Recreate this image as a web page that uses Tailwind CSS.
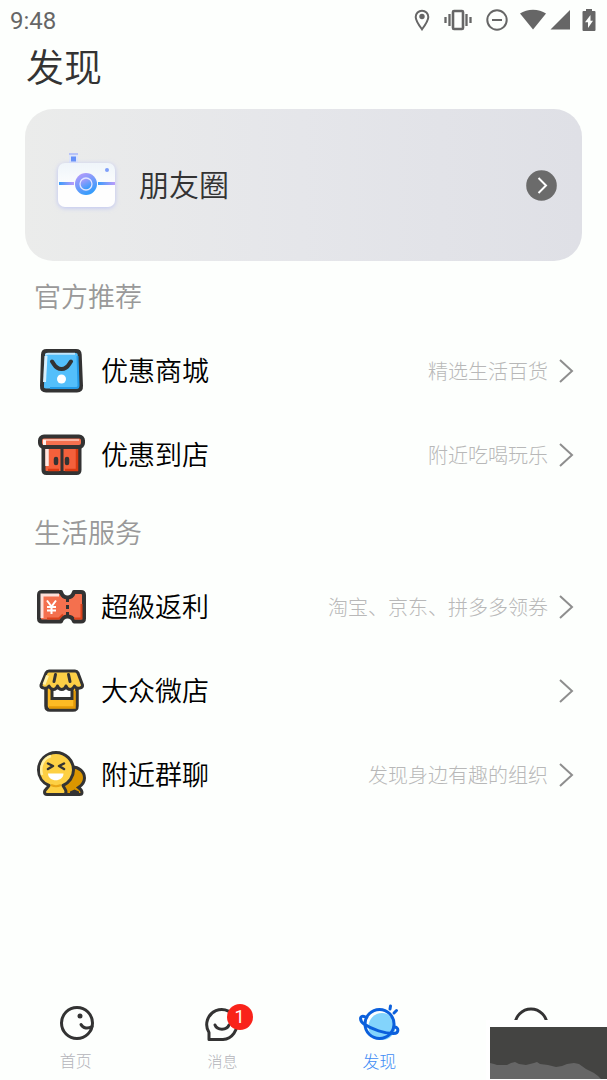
<!DOCTYPE html>
<html lang="zh-CN">
<head>
  <meta charset="UTF-8" />
  <meta name="viewport" content="width=device-width, initial-scale=1.0" />
  <title>发现</title>
  <script src="https://cdn.jsdelivr.net/npm/@tailwindcss/browser@4"></script>
</head>
<body class="min-h-screen flex flex-col overflow-x-hidden bg-[#fdfffd] text-black font-['Roboto','Noto_Sans_CJK_SC',sans-serif]">

  <!-- Status bar -->
  <header class="h-10 shrink-0 flex items-center justify-between pl-[10px] pr-[11px] text-[#666]">
    <span class="pt-0.5 text-2xl">9:48</span>
    <div class="flex items-center">
      <svg class="w-4 h-[22px]" viewBox="0 0 16 22" fill="none" stroke="currentColor" stroke-width="2">
        <path d="M8 20.300C5.500 17 1.700 12 1.700 8a6.300 6.300 0 0 1 12.600 0c0 4-3.800 9-6.300 12.300z" />
        <circle cx="8" cy="7.500" r="2.700" fill="currentColor" stroke="none" />
      </svg>
      <svg class="w-7 h-[22px] ml-[14px]" viewBox="0 0 28 22" fill="none" stroke="currentColor" stroke-width="2.300">
        <rect x="9" y="2" width="10" height="18" rx="1" stroke-width="2.600" />
        <path d="M5.500 5v12M22.500 5v12M1.500 8v6M26.500 8v6" />
      </svg>
      <svg class="w-[22px] h-[22px] ml-[14px]" viewBox="0 0 22 22" fill="none" stroke="currentColor" stroke-width="2">
        <circle cx="11" cy="11" r="9.700" />
        <path d="M6 11h10" />
      </svg>
      <svg class="w-[26px] h-[22px] ml-3" viewBox="0 0 26 22" fill="currentColor">
        <path d="M0 4.500C7-.6 19-.6 26 4.500L13 20.500z" />
      </svg>
      <svg class="w-5 h-[22px] ml-1" viewBox="0 0 20 22" fill="currentColor">
        <path d="M20 1v19.500H.5z" />
      </svg>
      <svg class="w-[14px] h-6 ml-3" viewBox="0 0 14 24" fill="currentColor">
        <path fill-rule="evenodd" d="M4 1h6v2h2.500q1 0 1 1v18q0 1-1 1h-11q-1 0-1-1V4q0-1 1-1H4zM8.500 7L3 14.300h3V20l5-7.300H8.500z" />
      </svg>
    </div>
  </header>

  <main class="flex-1 px-[25px]">
    <h1 class="h-14 flex items-center pl-px text-[38px] font-[350] text-[#333]">发现</h1>

    <!-- Moments card -->
    <a href="#" class="mt-[13px] h-[152px] flex items-center rounded-[28px] pl-[26px] pr-[25px] bg-linear-to-r from-[#ebeceb] via-[#e5e6ea] to-[#dfe0e6]">
      <svg class="w-[70px] h-[70px]" viewBox="0 0 70 70">
        <defs>
          <linearGradient id="lens" x1="0" y1="0" x2="0.5" y2="1">
            <stop offset="0" stop-color="#c29afb" />
            <stop offset="1" stop-color="#369cfb" />
          </linearGradient>
          <linearGradient id="stripLeft">
            <stop offset="0" stop-color="#3a9cfa" />
            <stop offset="1" stop-color="#bc9cfb" />
          </linearGradient>
          <linearGradient id="shell" x1="0" y1="0" x2="0" y2="1">
            <stop offset="0" stop-color="#eff5fa" />
            <stop offset="0.6" stop-color="#fefefe" />
          </linearGradient>
          <filter id="glow" x="-20%" y="-20%" width="140%" height="140%">
            <feDropShadow dx="0" dy="1" stdDeviation="2.500" flood-color="#a9b2f5" flood-opacity="0.7" />
          </filter>
        </defs>
        <path d="M18 5h9v11h-9z" fill="#dfe6fa" />
        <path d="M18 3h9v2h-9z" fill="#b8c3f7" />
        <path d="M20 6.500h5v5h-5z" fill="#6590f8" />
        <rect x="7" y="13" width="57" height="44" rx="7" fill="url(#shell)" filter="url(#glow)" />
        <rect x="8" y="32" width="15" height="3" fill="url(#stripLeft)" />
        <rect x="47" y="32" width="17" height="3" fill="url(#stripLeft)" />
        <circle cx="35" cy="34" r="11" fill="url(#lens)" />
        <circle cx="35" cy="34" r="6" fill="url(#lens)" stroke="#e2e5ff" stroke-width="1.300" />
        <circle cx="56" cy="20" r="2" fill="#7f9ff9" />
      </svg>
      <span class="ml-[18px] pt-0.5 text-3xl font-[350] text-[#333]">朋友圈</span>
      <svg class="ml-auto w-[31px] h-[31px]" viewBox="0 0 31 31" fill="none">
        <circle cx="15.500" cy="15.500" r="15.300" fill="#6b6b6b" />
        <path d="M12.500 8l7.500 7.500-7.500 7.500" stroke="#fff" stroke-width="2" />
      </svg>
    </a>

    <!-- Official picks -->
    <section class="pl-[9px] pr-2">
      <h2 class="h-[68px] pt-[7px] flex items-center text-[27px] font-[350] text-[#999]">官方推荐</h2>
      <ul>
        <li>
          <a href="#" class="h-[84px] flex items-center">
            <svg class="w-[54px] h-[54px]" viewBox="0 0 54 54">
              <path d="M12.500 7H42q3.500 0 3.700 3.500L47 42q.3 4.500-4 4.500H12q-4.300 0-4-4.500L9 10.500Q9.200 7 12.500 7z" fill="#53bffb" stroke="#333" stroke-width="4" />
              <path d="M12 11.500q0-1.700 2-1.700h27" fill="none" stroke="#c0e6fd" stroke-width="2" />
              <path d="M12 12l-1.500 26" stroke="#d7effd" stroke-width="3" />
              <path d="M43.500 12l1 29.500q0 2.500-2.500 2.500H16" fill="none" stroke="#249be8" stroke-width="2" />
              <path d="M18 17.500c2 2 3 7.500 9.500 7.500s7.500-5.500 9.500-7.500" fill="none" stroke="#333" stroke-width="4" stroke-linecap="round" />
              <circle cx="27.500" cy="35" r="4.500" fill="#fff" />
            </svg>
            <span class="ml-[13px] pt-[3px] text-[27px] font-[350]">优惠商城</span>
            <span class="ml-auto pt-0.5 text-xl font-light text-[#b8b8b8]">精选生活百货</span>
            <svg class="ml-[10px] w-4 h-6" viewBox="0 0 16 24" fill="none" stroke="#8e8e8e" stroke-width="2"><path d="M2 1l12 11L2 23" /></svg>
          </a>
        </li>
        <li>
          <a href="#" class="h-[84px] flex items-center">
            <svg class="w-[54px] h-[54px]" viewBox="0 0 54 54">
              <path d="M9.500 18v24q0 3 3 3h30q3 0 3-3V18z" fill="#f4603b" stroke="#333" stroke-width="4" />
              <path d="M13 19v19" stroke="#fde7e2" stroke-width="3.500" />
              <path d="M43 20v22H31M25 42H14" fill="none" stroke="#d93a12" stroke-width="2.500" />
              <rect x="6" y="8.500" width="43" height="10.500" rx="4" fill="#f5704f" stroke="#333" stroke-width="4" />
              <path d="M9 12h36" stroke="#fbb3a0" stroke-width="2" />
              <path d="M9 12h3v5H9z" fill="#fff1ed" />
              <path d="M28 19v26" stroke="#333" stroke-width="3" />
              <path d="M22 31v4M33 31v4" stroke="#333" stroke-width="4.500" stroke-linecap="round" />
            </svg>
            <span class="ml-[13px] pt-[3px] text-[27px] font-[350]">优惠到店</span>
            <span class="ml-auto pt-0.5 text-xl font-light text-[#b8b8b8]">附近吃喝玩乐</span>
            <svg class="ml-[10px] w-4 h-6" viewBox="0 0 16 24" fill="none" stroke="#8e8e8e" stroke-width="2"><path d="M2 1l12 11L2 23" /></svg>
          </a>
        </li>
      </ul>
    </section>

    <!-- Local services -->
    <section class="pl-[9px] pr-2">
      <h2 class="h-[68px] pt-[7px] flex items-center text-[27px] font-[350] text-[#999]">生活服务</h2>
      <ul>
        <li>
          <a href="#" class="h-[84px] flex items-center">
            <svg class="w-[54px] h-[54px]" viewBox="0 0 54 54">
              <path d="M8 12h19c1 3.500 3.500 5.500 6.500 5.500s5.500-2 6.500-5.500h7q3 0 3 3v23.500q0 3-3 3h-7c-1-3.500-3.500-5-6.500-5s-5.500 1.500-6.500 5H8q-3 0-3-3V15q0-3 3-3z" fill="#f4704e" stroke="#333" stroke-width="4" stroke-linejoin="round" />
              <path d="M25 15H8v23" fill="none" stroke="#fde0d9" stroke-width="3" />
              <path d="M13 38.500h12l4-4M40 38.500h7.500V24" fill="none" stroke="#dc431c" stroke-width="2" />
              <path d="M13 20.500l4.500 6 4.500-6M17.500 26v8M13 27h9M13 30.500h9" fill="none" stroke="#fff" stroke-width="2" />
              <path d="M33.500 17v5M33.500 25v4M33.500 32v5" stroke="#333" stroke-width="3" />
            </svg>
            <span class="ml-[13px] pt-[3px] text-[27px] font-[350]">超級返利</span>
            <span class="ml-auto pt-0.5 text-xl font-light text-[#b8b8b8]">淘宝、京东、拼多多领券</span>
            <svg class="ml-[10px] w-4 h-6" viewBox="0 0 16 24" fill="none" stroke="#8e8e8e" stroke-width="2"><path d="M2 1l12 11L2 23" /></svg>
          </a>
        </li>
        <li>
          <a href="#" class="h-[84px] flex items-center">
            <svg class="w-[54px] h-[54px]" viewBox="0 0 54 54">
              <path d="M12 22v20q0 4 4 4h23q4 0 4-4V22z" fill="#fdbb24" stroke="#333" stroke-width="3.500" />
              <path d="M40.500 27v16.500H15" fill="none" stroke="#e39a08" stroke-width="2.500" />
              <path d="M18 20h20v14.500H18z" fill="#fff" stroke="#333" stroke-width="3" />
              <path d="M15 7h26q2 0 3 2l4.500 12c.5 3-5.500 5-8 1-2 4.500-7 4.500-8.500 0-1.500 4.500-7 4.500-8.500 0-1.500 4.500-6.500 4.500-8.500 0-2.500 4-8.500 2-8-1L12 9q1-2 3-2z" fill="#fccf46" stroke="#333" stroke-width="3" stroke-linejoin="round" />
              <path d="M13.500 11.500l-3.500 9" stroke="#fff2ad" stroke-width="3" />
              <path d="M21.500 10.500l-1.500 7M34.500 10.500l1.500 7" stroke="#333" stroke-width="3" stroke-linecap="round" />
            </svg>
            <span class="ml-[13px] pt-[3px] text-[27px] font-[350]">大众微店</span>
            <svg class="ml-auto w-4 h-6" viewBox="0 0 16 24" fill="none" stroke="#8e8e8e" stroke-width="2"><path d="M2 1l12 11L2 23" /></svg>
          </a>
        </li>
        <li>
          <a href="#" class="h-[84px] flex items-center">
            <svg class="w-[54px] h-[54px]" viewBox="0 0 54 54">
              <path d="M38 19c7 0 12.500 4.500 12.500 11 0 5-3 7.500-6 9.500 2 1.500 3.500 3 3.500 5 0 1.500-1 2-2.500 2H26V19z" fill="#db9600" stroke="#333" stroke-width="3" />
              <path d="M15 37.500C8.500 35 4.500 29 4.500 22a17.500 17.500 0 0 1 35 0c0 7-4.500 13-10.500 15.500 1 2.500 3 4 3 6.500 0 1.500-1 2.500-2.500 2.500H13c-1.500 0-2.500-1-2.500-2.500 0-2.500 3.500-4 4.500-6.500z" fill="#fdd044" stroke="#333" stroke-width="3" stroke-linejoin="round" />
              <path d="M8 27C5.500 18 9.500 10 17 8" fill="none" stroke="#fff0a0" stroke-width="2.500" />
              <path d="M17 37q5 2.500 10 0" fill="none" stroke="#e8a616" stroke-width="2" />
              <path d="M14 15.500l5 2.500-5 3M30 15.500l-5 2.500 5 3" fill="none" stroke="#333" stroke-width="2.500" stroke-linecap="round" stroke-linejoin="round" />
              <path d="M14 25.500h15.500c0 9-15.500 9-15.500 0z" fill="#fff" />
              <path d="M36 43.500l4.500-2 4.500 2v2h-9z" fill="#333" />
            </svg>
            <span class="ml-[13px] pt-[3px] text-[27px] font-[350]">附近群聊</span>
            <span class="ml-auto pt-0.5 text-xl font-light text-[#b8b8b8]">发现身边有趣的组织</span>
            <svg class="ml-[10px] w-4 h-6" viewBox="0 0 16 24" fill="none" stroke="#8e8e8e" stroke-width="2"><path d="M2 1l12 11L2 23" /></svg>
          </a>
        </li>
      </ul>
    </section>
  </main>

  <!-- Tab bar -->
  <nav class="relative h-20 shrink-0 grid grid-cols-4 text-base leading-6 font-light text-[#b4b4ba]">
    <a href="#" class="flex flex-col items-center gap-1.5">
      <svg class="w-11 h-11" viewBox="0 0 44 44" fill="none" stroke="#333" stroke-width="3">
        <circle cx="23" cy="23" r="15.500" />
        <path d="M27 24.500c2 4 7 4.500 11 2" stroke-linecap="round" />
        <circle cx="26" cy="16" r="2.500" fill="#333" stroke="none" />
      </svg>
      <span>首页</span>
    </a>
    <a href="#" class="flex flex-col items-center gap-1.5 pr-2.5">
      <span class="relative">
        <svg class="w-11 h-11" viewBox="0 0 44 44" fill="none" stroke="#333" stroke-width="3">
          <path d="M8 39.500v-7A15 15 0 1 1 22 39.500z" stroke-linejoin="round" />
          <path d="M14 25c2 5.500 12 5.500 14 0" stroke-linecap="round" />
        </svg>
        <span class="absolute left-[26px] top-1 w-[26px] h-[26px] rounded-full bg-[#f9231a] text-white text-lg font-normal leading-[26px] text-center">1</span>
      </span>
      <span class="text-[15px]">消息</span>
    </a>
    <a href="#" class="flex flex-col items-center gap-1.5 text-[#3f8cf5]">
      <svg class="w-11 h-11" viewBox="0 0 44 44" fill="none" stroke="#0b60dc" stroke-width="3">
        <circle cx="25" cy="26.500" r="13.500" fill="#83d4fc" stroke="none" />
        <circle cx="22.500" cy="24" r="14.500" />
        <path d="M8.500 17C2.500 14 2 20.500 7 24c8 5.500 21 9.500 29.500 9.500 6 0 5.500-7 .5-6.500" stroke-linecap="round" />
        <path d="M33.500 6l-.5 3M39.500 10.500l-2.500 2.500" stroke-linecap="round" />
      </svg>
      <span class="text-[17px]">发现</span>
    </a>
    <a href="#" class="flex flex-col items-center gap-1.5" aria-label="我的">
      <svg class="w-11 h-11" viewBox="0 0 44 44" fill="none" stroke="#333" stroke-width="3">
        <circle cx="22" cy="25" r="16" />
      </svg>
    </a>

    <!-- Floating monitor -->
    <div class="absolute right-0 bottom-0 w-[121px] h-[60px] bg-white pt-[7px] pl-1 pb-px">
      <svg class="w-full h-full bg-[#444442]" viewBox="0 0 117 52" preserveAspectRatio="none">
        <path d="M0 36l4 1 3 1h10l4-2 4-1 4 2 7 1 4-1 4-1 3-1 3 2 8 1 8 2 6-1 5-2 7-1 5 1 7 5 8 4 4 3 3 3v2H0z" fill="#666" />
      </svg>
    </div>
  </nav>
</body>
</html>
